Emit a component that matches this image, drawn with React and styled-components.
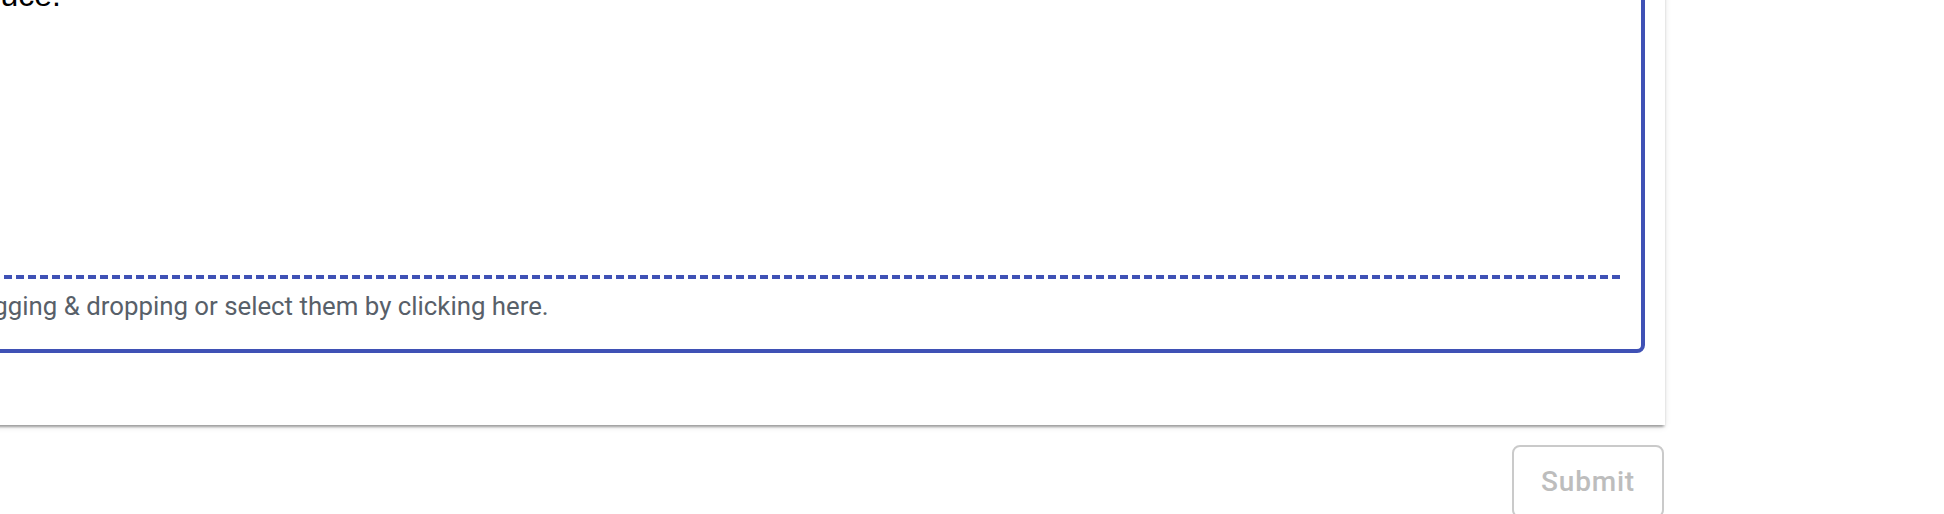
import React from 'react'
import styled, { createGlobalStyle } from 'styled-components'

const GlobalStyle = createGlobalStyle`
   html, body {
      margin: 0;
      padding: 0;
      background: #ffffff;
   }
   body {
      width: 1944px;
      height: 514px;
      overflow: hidden;
   }
`

const Page = styled.div`
   display: flex;
   flex-direction: column;
   width: 1921px;
   margin: -117px 0 0 -256px;
`

const Card = styled.div`
   background: #ffffff;
   padding: 20px 20px 72px 20px;
   box-shadow: 0 4px 2px -2px rgba(0, 0, 0, 0.2), 0 2px 2px 0 rgba(0, 0, 0, 0.14), 0 2px 6px 0 rgba(0, 0, 0, 0.12);
`

const Field = styled.div`
   display: flex;
   flex-direction: column;
   border: 4px solid #3f51b5;
   border-radius: 8px;
`

const Editor = styled.div`
   box-sizing: border-box;
   height: 368px;
   padding: 16px 19px;
   font-family: "Liberation Sans", Arial, sans-serif;
   font-size: 32px;
   line-height: 48px;
   color: #000000;
   white-space: pre-line;
`

const DropZone = styled.div`
   display: flex;
   flex-direction: column;
   margin: 0 20px;
`

const DashedLine = styled.div`
   height: 4px;
   background: repeating-linear-gradient(to right, #3f51b5 0 8px, transparent 8px 12px);
   background-position: right top;
`

const DropHint = styled.div`
   padding: 9px 0 25px 0;
   font-family: Roboto, "Noto Sans", sans-serif;
   font-size: 25.8px;
   line-height: 36px;
   color: #586069;
   white-space: nowrap;
`

const Actions = styled.div`
   display: flex;
   justify-content: flex-end;
   margin-top: 20px;
   padding-right: 1px;
`

const Button = styled.button`
   box-sizing: border-box;
   width: 152px;
   height: 73px;
   padding: 10px 0;
   background: transparent;
   border: 2px solid #cacaca;
   border-radius: 8px;
   font-family: Roboto, "Noto Sans", sans-serif;
   font-weight: 500;
   font-size: 28px;
   line-height: 49px;
   letter-spacing: 0.8px;
   color: #bdbdbd;
   cursor: default;
`

function App() {
   return (
      <>
         <GlobalStyle />
         <Page>
            <Card>
               <Field>
                  <Editor>
                     {'Please describe what happened in as much detail as you can, with the\nsteps to reproduce.'}
                  </Editor>
                  <DropZone>
                     <DashedLine />
                     <DropHint>Attach files by dragging &amp; dropping or select them by clicking here.</DropHint>
                  </DropZone>
               </Field>
            </Card>
            <Actions>
               <Button disabled>Submit</Button>
            </Actions>
         </Page>
      </>
   )
}

export default App
